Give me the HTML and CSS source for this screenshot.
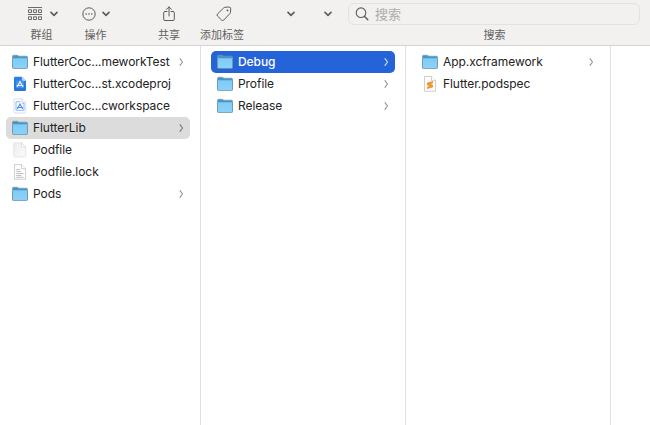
FILE: index.html
```
<!DOCTYPE html>
<html lang="zh-CN">
<head>
<meta charset="utf-8">
<title>Finder</title>
<link rel="stylesheet" href="styles.css">
</head>
<body>
<svg class="defs" width="0" height="0">
  <defs>
    <linearGradient id="folderFill" x1="0" y1="0" x2="0" y2="1"><stop offset="0" stop-color="#80caf4"/><stop offset="1" stop-color="#8ad2fa"/></linearGradient>
    <linearGradient id="projFill" x1="0" y1="0" x2="0" y2="1"><stop offset="0" stop-color="#2f7fe0"/><stop offset="1" stop-color="#2674dc"/></linearGradient>
    <linearGradient id="paperFill" x1="0" y1="0" x2="1" y2="1"><stop offset="0" stop-color="#ededed"/><stop offset="1" stop-color="#fbfbfb"/></linearGradient>
  </defs>
  <symbol id="folder" viewBox="0 0 16 16">
    <path d="M.5 13.500V2.300q0-1 1-1h3.700q.6 0 1 .4l.6.5h7.700q1 0 1 1v10.300z" fill="#4396c6" stroke="#7b98a8" stroke-width=".7"/>
    <path d="M.7 4.300h14.600v9.300q0 .7-.7.7H1.400q-.7 0-.7-.7z" fill="url(#folderFill)"/>
    <path d="M.4 4.500v9.200q0 .8.8.8h13.600q.8 0 .8-.8V4.500" fill="none" stroke="#6c94a9" stroke-width=".8"/>
  </symbol>
  <symbol id="project" viewBox="0 0 16 16">
    <path d="M3.200.8h6.600L14 5v8.700q0 1.300-1.300 1.300H3.200Q2 15 2 13.700V2Q2 .8 3.200.8z" fill="url(#projFill)"/>
    <path d="M9.800.8 14 5h-3.200q-1 0-1-1z" fill="#b4d8fd"/>
    <rect x="4" y="4.600" width="8" height="7.600" fill="#559cef" opacity=".6"/>
    <path d="m5 11 3-5.400L11 11M4.700 9.500h6.600" fill="none" stroke="#e2f0ff" stroke-width="1.200"/>
  </symbol>
  <symbol id="workspace" viewBox="0 0 16 16">
    <path d="M3 .8h7L13.700 4.500v9.500q0 1-1 1H3q-1 0-1-1V1.800q0-1 1-1z" fill="#fcfdff" stroke="#ccd2dc" stroke-width=".7"/>
    <path d="M4 12.300V3.700h4.500M10.300 5.300H12v7H4" fill="none" stroke="#7fb2f5" stroke-width=".9"/>
    <path d="M10 .8v3.700h3.700" fill="#eef3fa" stroke="#ccd2dc" stroke-width=".6"/>
    <path d="m5.400 11 2.600-5 2.600 5M5 9.500h6" fill="none" stroke="#4d94ef" stroke-width="1.200"/>
  </symbol>
  <symbol id="blank" viewBox="0 0 16 16">
    <path d="M2.500.8h7L13.700 5v9q0 1-1 1h-10q-1 0-1-1V2q0-1.200.8-1.200z" fill="url(#paperFill)" stroke="#dadada" stroke-width=".6"/>
    <path d="M9.500.8V5h4.200z" fill="#fff" stroke="#cecece" stroke-width=".6"/>
  </symbol>
  <symbol id="textfile" viewBox="0 0 16 16">
    <path d="M2.500.5h7l4.100 4.200v10.600H2.500z" fill="#fdfdfd" stroke="#bdbdbd" stroke-width=".7"/>
    <path d="M9.500.5v4.200h4.100" fill="#fff" stroke="#bdbdbd" stroke-width=".7"/>
    <path d="M4.200 5.500H8M4.200 7.500H9M4.200 9.500h7.300M4.200 11.500h5M4.200 13.300h7.300" stroke="#b0b0b0" stroke-width=".8"/>
  </symbol>
  <symbol id="podspec" viewBox="0 0 16 16">
    <path d="M2.500.5h7l4.100 4.200v10.600H2.500z" fill="#fcfcfc" stroke="#bbb" stroke-width=".7"/>
    <path d="M9.500.5v4.200h4.100" fill="#fff" stroke="#bbb" stroke-width=".7"/>
    <path d="m5 6.700 6-1.700v2.300L8.700 8.100l2.300.8v2.300l-6 1.900v-2.200l2.400-.8L5 9.200z" fill="#f3922c"/>
  </symbol>
  <symbol id="chevron" viewBox="0 0 5 8"><path d="m1 .6 2.500 3.400L1 7.400" fill="none" stroke="currentColor" stroke-width="1.050" stroke-linecap="round" stroke-linejoin="round"/></symbol>
  <symbol id="down" viewBox="0 0 8 6"><path d="m1 1.400 3 2.900 3-2.900" fill="none" stroke="currentColor" stroke-width="1.600" stroke-linecap="round" stroke-linejoin="round"/></symbol>
</svg>
<div class="window">
  <header class="toolbar">
    <div class="tool group">
      <div class="glyphs">
        <svg width="16" height="16" viewBox="0 0 16 16" fill="none" stroke="currentColor"><path d="M1 1.500h14M1 8.500h14" stroke-width=".9"/><path d="M1.500 3.800h3v2.700h-3zM6.500 3.800h3v2.700h-3zM11.500 3.800h3v2.700h-3zM1.500 10.800h3v2.700h-3zM6.500 10.800h3v2.700h-3zM11.500 10.800h3v2.700h-3z" stroke-width=".9"/></svg>
        <svg class="down" width="8" height="6"><use href="#down"/></svg>
      </div>
      <span class="label">群组</span>
    </div>
    <div class="tool action">
      <div class="glyphs">
        <svg width="14" height="14" viewBox="0 0 14 14"><circle cx="7" cy="7" r="6.200" fill="none" stroke="currentColor"/><circle cx="4.200" cy="7" r=".8" fill="currentColor"/><circle cx="7" cy="7" r=".8" fill="currentColor"/><circle cx="9.800" cy="7" r=".8" fill="currentColor"/></svg>
        <svg class="down" width="8" height="6"><use href="#down"/></svg>
      </div>
      <span class="label">操作</span>
    </div>
    <div class="tool share">
      <div class="glyphs">
        <svg width="12" height="16" viewBox="0 0 12 16" fill="none" stroke="currentColor" stroke-linecap="round" stroke-linejoin="round"><path d="M4 5.500H2q-1.300 0-1.300 1.300v6.400q0 1.300 1.300 1.300h8q1.300 0 1.300-1.300V6.800q0-1.300-1.300-1.300H8M6 10V1M3.500 3.400 6 .9l2.500 2.500"/></svg>
      </div>
      <span class="label">共享</span>
    </div>
    <div class="tool tags">
      <div class="glyphs">
        <svg width="16" height="16" viewBox="0 0 16 16" fill="none" stroke="currentColor" stroke-linejoin="round"><path d="M9 1.300 12.700 1q2-.1 2 1.700l-.2 3.500q-.1.900-.7 1.500l-6.100 6.400q-1 1-2 0L1.500 10q-1-1 0-2l6.200-6.100q.6-.5 1.300-.6z"/><circle cx="11.500" cy="4.400" r=".9" fill="currentColor" stroke="none"/></svg>
      </div>
      <span class="label">添加标签</span>
    </div>
    <div class="extras">
      <svg width="8" height="6"><use href="#down"/></svg>
      <svg width="8" height="6"><use href="#down"/></svg>
    </div>
    <div class="search">
      <div class="field">
        <svg width="14" height="14" viewBox="0 0 14 14" fill="none" stroke="currentColor" stroke-linecap="round"><circle cx="6" cy="5.700" r="4.800" stroke-width="1.100"/><path d="m9.600 9.400 3.200 3.300" stroke-width="1.400"/></svg>
        <span>搜索</span>
      </div>
      <span class="label">搜索</span>
    </div>
  </header>
  <main class="columns">
    <section class="column first">
      <div class="row"><svg class="icon"><use href="#folder"/></svg><span class="name">FlutterCoc...meworkTest</span><svg class="chev"><use href="#chevron"/></svg></div>
      <div class="row"><svg class="icon"><use href="#project"/></svg><span class="name">FlutterCoc...st.xcodeproj</span></div>
      <div class="row"><svg class="icon"><use href="#workspace"/></svg><span class="name">FlutterCoc...cworkspace</span></div>
      <div class="row open"><svg class="icon"><use href="#folder"/></svg><span class="name">FlutterLib</span><svg class="chev"><use href="#chevron"/></svg></div>
      <div class="row"><svg class="icon"><use href="#blank"/></svg><span class="name">Podfile</span></div>
      <div class="row"><svg class="icon"><use href="#textfile"/></svg><span class="name">Podfile.lock</span></div>
      <div class="row"><svg class="icon"><use href="#folder"/></svg><span class="name">Pods</span><svg class="chev"><use href="#chevron"/></svg></div>
    </section>
    <section class="column">
      <div class="row selected"><svg class="icon"><use href="#folder"/></svg><span class="name">Debug</span><svg class="chev"><use href="#chevron"/></svg></div>
      <div class="row"><svg class="icon"><use href="#folder"/></svg><span class="name">Profile</span><svg class="chev"><use href="#chevron"/></svg></div>
      <div class="row"><svg class="icon"><use href="#folder"/></svg><span class="name">Release</span><svg class="chev"><use href="#chevron"/></svg></div>
    </section>
    <section class="column">
      <div class="row"><svg class="icon"><use href="#folder"/></svg><span class="name">App.xcframework</span><svg class="chev"><use href="#chevron"/></svg></div>
      <div class="row"><svg class="icon"><use href="#podspec"/></svg><span class="name">Flutter.podspec</span></div>
    </section>
  </main>
</div>
</body>
</html>
```

FILE: styles.css
```
* { box-sizing: border-box; }
body {
  margin: 0;
  background: #fff;
  font-family: Inter, "Noto Sans CJK SC", sans-serif;
  color: #222;
}
svg { display: block; flex: none; }
.defs { position: absolute; }
.window { display: flex; flex-direction: column; height: 425px; overflow: hidden; }

.toolbar {
  display: flex;
  flex: none;
  height: 46px;
  padding-left: 16px;
  background: #f2f1ef;
  border-bottom: 1px solid #d3d2d1;
  color: #5c5b5a;
}
.tool, .search { display: flex; flex-direction: column; align-items: center; flex: none; }
.glyphs { display: flex; align-items: center; height: 27px; }
.down { margin-left: 7px; margin-top: 1px; }
.label { font-size: 11px; line-height: 16px; white-space: nowrap; color: #62615f; }
.group { width: 51px; }
.group .glyphs { padding-left: 2px; }
.action { width: 55px; margin-left: 1px; }
.action .down { margin-left: 6px; }
.share { width: 40px; margin-left: 26px; }
.tags { width: 46px; margin-left: 10px; }
.tags .glyphs { padding-left: 3px; }
.extras { display: flex; gap: 29px; align-items: center; height: 28px; width: 103px; padding-left: 42px; }
.search { width: 292px; padding-top: 3px; }
.field {
  display: flex;
  align-items: center;
  gap: 6px;
  width: 292px;
  height: 22px;
  margin-bottom: 2px;
  padding-left: 6px;
  border: 1px solid #e3e2e0;
  border-radius: 6px;
  font-size: 13px;
  line-height: 20px;
}
.field span { color: #adacab; }
.field + .label { padding-left: 1px; }

.columns { display: flex; flex: 1; }
.column { flex: none; width: 205px; padding: 5px 10px 0; border-right: 1px solid #e0e0e0; }
.column.first { width: 201px; padding-left: 6px; }
.row {
  display: flex;
  align-items: center;
  height: 22px;
  padding: 0 6px;
  border-radius: 5px;
  font-size: 12px;
  line-height: 22px;
  letter-spacing: -0.06px;
}
.icon { width: 16px; height: 16px; margin-right: 5px; }
.name { flex: 1; white-space: nowrap; }
.chev { width: 5px; height: 8px; color: #929292; }
.open { background: #dcdcdc; }
.open .chev { color: #777; }
.selected { background: #2563d9; color: #fff; font-weight: 500; }
.selected .chev { color: #dce7fb; }
```
